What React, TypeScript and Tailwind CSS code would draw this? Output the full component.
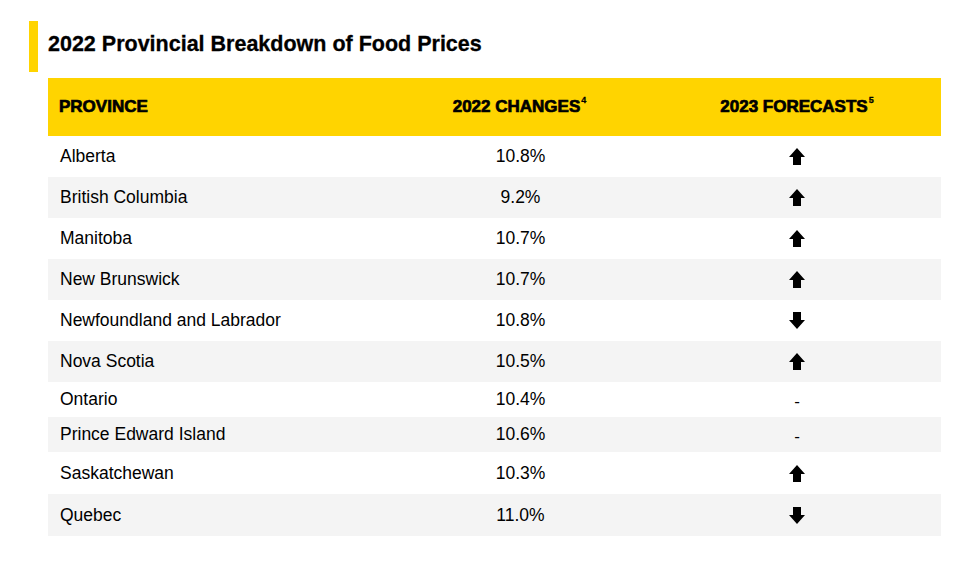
const rows: { name: string; change: string; trend: 'up' | 'down' | 'flat'; h: string }[] = [
  { name: 'Alberta', change: '10.8%', trend: 'up', h: 'h-[41px]' },
  { name: 'British Columbia', change: '9.2%', trend: 'up', h: 'h-[41px]' },
  { name: 'Manitoba', change: '10.7%', trend: 'up', h: 'h-[41px]' },
  { name: 'New Brunswick', change: '10.7%', trend: 'up', h: 'h-[41px]' },
  { name: 'Newfoundland and Labrador', change: '10.8%', trend: 'down', h: 'h-[41px]' },
  { name: 'Nova Scotia', change: '10.5%', trend: 'up', h: 'h-[41px]' },
  { name: 'Ontario', change: '10.4%', trend: 'flat', h: 'h-[35px]' },
  { name: 'Prince Edward Island', change: '10.6%', trend: 'flat', h: 'h-[35px]' },
  { name: 'Saskatchewan', change: '10.3%', trend: 'up', h: 'h-[42px]' },
  { name: 'Quebec', change: '11.0%', trend: 'down', h: 'h-[42px]' },
]

function Arrow({ down }: { down?: boolean }) {
  return (
    <svg width="16" height="17" viewBox="0 0 16 17" className={down ? 'rotate-180' : ''}>
      <path d="M8 0 L16 9 L12 9 L12 17 L4 17 L4 9 L0 9 Z" fill="#000" />
    </svg>
  )
}

export default function App() {
  return (
    <div className="w-[975px] h-[564px] bg-white font-['Liberation_Sans',Arial,sans-serif] text-black">
      <div className="flex items-start pt-[21px] pl-[29px]">
        <div className="w-[9px] h-[51px] bg-[#ffd400]" />
        <h1 className="ml-[10px] mt-[10px] text-[21.5px] font-bold leading-[26px] [-webkit-text-stroke:0.3px_black]">
          2022 Provincial Breakdown of Food Prices
        </h1>
      </div>

      <div className="ml-[48px] mt-[6px] w-[893px]">
        <div className="grid grid-cols-[332px_273px_288px] h-[58px] items-center bg-[#ffd400] text-[17px] font-bold [-webkit-text-stroke:0.7px_black]">
          <div className="pl-[11px]">PROVINCE</div>
          <div className="text-center pl-[6px]">
            2022 CHANGES<sup className="ml-[1px] text-[9px] align-[5px] [-webkit-text-stroke:0.3px_black]">4</sup>
          </div>
          <div className="text-center">
            2023 FORECASTS<sup className="ml-[1px] text-[9px] align-[5px] [-webkit-text-stroke:0.3px_black]">5</sup>
          </div>
        </div>

        {rows.map((r, i) => (
          <div
            key={r.name}
            className={`grid grid-cols-[332px_273px_288px] items-center text-[17.5px] ${r.h} ${i % 2 === 1 ? 'bg-[#f4f4f4]' : 'bg-white'}`}
          >
            <div className="pl-[12px]">{r.name}</div>
            <div className="text-center pl-[8px]">{r.change}</div>
            <div className="flex justify-center">
              {r.trend === 'flat' ? (
                <span className="text-[17px] leading-none pt-[4px]">-</span>
              ) : (
                <Arrow down={r.trend === 'down'} />
              )}
            </div>
          </div>
        ))}
      </div>
    </div>
  )
}
